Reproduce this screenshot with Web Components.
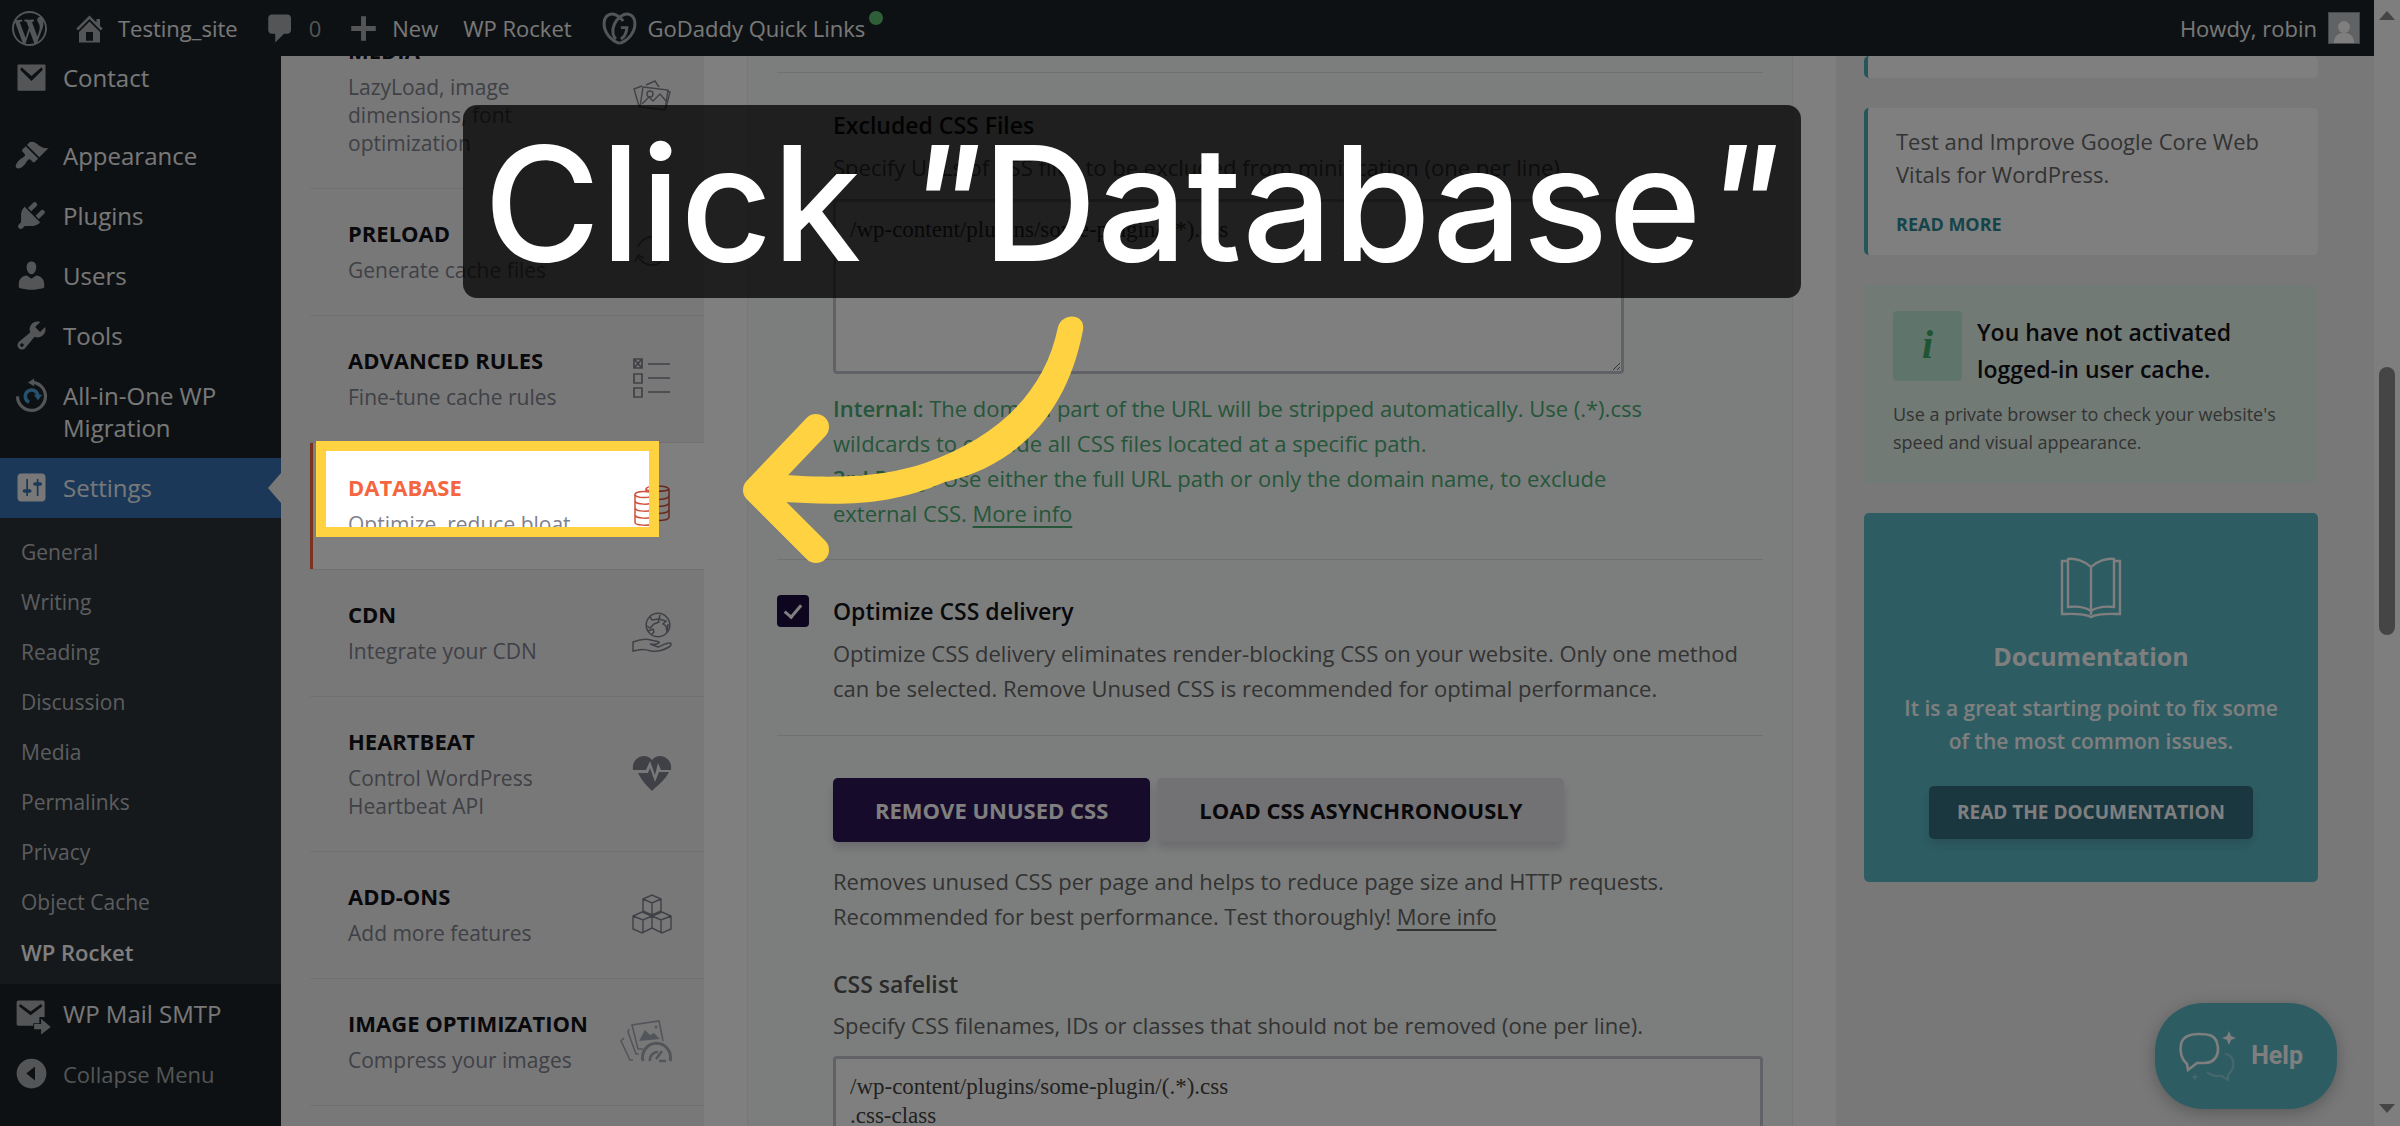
<!DOCTYPE html>
<html lang="en">
<head>
<meta charset="utf-8">
<title>WP Rocket</title>
<style>
    html, body { margin: 0; height: 100%; }
    body { overflow: hidden; background: #f0f0f1; color: #3c434a; font-family: "Open Sans", "Noto Sans", sans-serif; }
</style>
</head>
<body>
<wp-screen></wp-screen>

<script>
// --- Icons ---
const ICONS = {
    wordpress: '<path fill="currentColor" d="M20 10c0-5.51-4.49-10-10-10C4.48 0 0 4.49 0 10c0 5.52 4.48 10 10 10 5.51 0 10-4.48 10-10zM7.78 15.37L4.37 6.22c.55-.02 1.17-.08 1.17-.08.5-.06.44-1.13-.06-1.11 0 0-1.45.11-2.37.11-.18 0-.37 0-.58-.01C4.12 2.69 6.87 1.11 10 1.11c2.33 0 4.45.87 6.05 2.34-.68-.11-1.65.39-1.65 1.58 0 .74.45 1.36.9 2.1.35.61.55 1.36.55 2.46 0 1.49-1.4 5-1.4 5l-3.03-8.37c.54-.02.82-.17.82-.17.5-.05.44-1.25-.06-1.22 0 0-1.44.12-2.38.12-.87 0-2.33-.12-2.33-.12-.5-.03-.56 1.2-.06 1.22l.92.08 1.26 3.41zM17.41 10c.24-.64.74-1.87.43-4.25.7 1.29 1.05 2.71 1.05 4.25 0 3.29-1.73 6.24-4.4 7.78.97-2.59 1.94-5.2 2.92-7.78zM6.1 18.09C3.12 16.65 1.11 13.53 1.11 10c0-1.3.23-2.48.72-3.59C3.25 10.3 4.67 14.2 6.1 18.09zm4.03-6.63l2.58 6.98c-.86.29-1.76.45-2.71.45-.79 0-1.57-.11-2.29-.33.81-2.38 1.62-4.74 2.42-7.1z"/>',
    home: '<path fill="currentColor" d="M16 8.5l1.53 1.53-1.06 1.06L10 4.6l-6.47 6.49-1.06-1.06L10 2.5l4 4v-2h2v4zm-6-2.46l6 5.99V18H4v-5.97zM12 17v-5H8v5h4z"/>',
    comment: '<path fill="currentColor" d="M5 2h9c1.1 0 2 .9 2 2v7c0 1.1-.9 2-2 2h-2l-5 5v-5H5c-1.1 0-2-.9-2-2V4c0-1.1.9-2 2-2z"/>',
    plus: '<path fill="currentColor" d="M8.600 3h2.800v5.600H17v2.800h-5.600V17H8.600v-5.600H3V8.600h5.600z"/>',
    godaddy: '<g fill="none" stroke="currentColor" stroke-width="1.700"><path d="M10 18.500C5 17 1 12 1.200 7 1.300 2 5.500.5 9 2.800c1.500 1 2.500 2 3 3"/><path d="M10 18.500c5-1.500 9-6.500 8.800-11.500C18.700 2 14.500.5 11 2.800 7.500 5.200 5.600 9.500 6.300 13c.3 1.400.9 2.400 1.700 3"/><path d="M10.800 9.500h3.400c-.2 3-1.600 5.500-3.400 6.500"/></g>',
    contact: '<path fill="currentColor" fill-rule="evenodd" d="M2.500 2.500h15a.5.5 0 0 1 .5.5v14a.5.5 0 0 1-.5.5h-15A.5.5 0 0 1 2 17V3a.5.5 0 0 1 .5-.5zM4.300 4.200L3.500 5.500 10 12l6.500-6.500-.8-1.300L10 9.200z"/>',
    appearance: '<path fill="currentColor" d="M14.48 11.06L7.41 3.99l1.5-1.5c.5-.56 2.3-.47 3.51.32 1.21.8 1.43 1.28 2.91 2.1 1.18.64 2.45 1.26 4.45.85zm-.71.71L6.7 4.7 4.93 6.47c-.39.39-.39 1.02 0 1.41l1.06 1.06c.39.39.39 1.03 0 1.42-.6.6-1.43 1.11-2.21 1.69-.35.26-.7.53-1.01.84C1.43 14.23.4 16.08 1.4 17.07c.99 1 2.84-.03 4.18-1.36.31-.31.58-.66.85-1.02.57-.78 1.08-1.61 1.69-2.21.39-.39 1.02-.39 1.41 0l1.06 1.06c.39.39 1.02.39 1.41 0z"/>',
    plugins: '<path fill="currentColor" d="M13.11 4.36L9.87 7.6 8 5.73l3.24-3.24c.35-.34 1.05-.2 1.56.32.52.51.66 1.21.31 1.55zm-8 1.77l.91-1.12 9.01 9.01-1.19.84c-.71.71-2.63 1.16-3.82 1.16H6.14L4.9 17.26c-.59.59-1.54.59-2.12 0-.59-.58-.59-1.53 0-2.12l1.24-1.24v-3.88c0-1.13.4-3.19 1.09-3.89zm7.26 3.97l3.24-3.24c.34-.35 1.04-.21 1.55.31.52.51.66 1.21.31 1.55l-3.24 3.25z"/>',
    users: '<path fill="currentColor" d="M10 9.25c-2.27 0-2.73-3.44-2.73-3.44C7 4.02 7.82 2 9.97 2c2.16 0 2.98 2.02 2.71 3.81 0 0-.41 3.44-2.68 3.44zm0 2.57L12.72 10c2.39 0 4.52 2.33 4.52 4.53v2.49s-3.65 1.13-7.24 1.13c-3.65 0-7.24-1.13-7.24-1.13v-2.49c0-2.25 1.94-4.48 4.47-4.48z"/>',
    tools: '<path fill="currentColor" d="M16.68 9.77c-1.34 1.34-3.3 1.67-4.95.99l-5.41 6.52c-.99.99-2.59.99-3.58 0s-.99-2.59 0-3.57l6.52-5.42c-.68-1.65-.35-3.61.99-4.95 1.28-1.28 3.12-1.62 4.72-1.06l-2.89 2.89 2.82 2.82 2.86-2.87c.53 1.58.18 3.39-1.08 4.65zM3.81 16.21c.4.39 1.04.39 1.43 0 .4-.4.4-1.04 0-1.43-.39-.4-1.03-.4-1.43 0-.39.39-.39 1.03 0 1.43z"/>',
    migration: '<g fill="none" stroke-width="1.800"><path stroke="currentColor" d="M2 10.500a8 8 0 1 0 8.500-8"/><path fill="currentColor" d="M8 2.500L11.500.300v4.400z"/><path stroke="#4aa3df" stroke-width="2" d="M8.600 13.800a3.600 3.600 0 1 1 5-4"/><path fill="#4aa3df" d="M11.300 9.500h4.800l-2.400 3.200z"/></g>',
    settings: '<path fill="currentColor" d="M18 16V4c0-1.100-.9-2-2-2H4c-1.100 0-2 .9-2 2v12c0 1.100.9 2 2 2h12c1.100 0 2-.9 2-2zM8 11h1c.55 0 1 .45 1 1s-.45 1-1 1H8v1.500c0 .28-.22.5-.5.5s-.5-.22-.5-.5V13H6c-.55 0-1-.45-1-1s.45-1 1-1h1V5.500c0-.28.22-.5.5-.5s.5.22.5.5V11zm5-2h-1c-.55 0-1-.45-1-1s.45-1 1-1h1V5.500c0-.28.22-.5.5-.5s.5.22.5.5V7h1c.55 0 1 .45 1 1s-.45 1-1 1h-1v5.500c0 .28-.22.5-.5.5s-.5-.22-.5-.5V9z"/>',
    mail: '<path fill="currentColor" fill-rule="evenodd" d="M2.500 2.500h14c.6 0 1 .4 1 1V12h-3v3.500H11V17H2.500c-.6 0-1-.4-1-1V3.500c0-.6.4-1 1-1zM3.600 4.500L2.800 5.800 9.500 11l6.700-5.200-.8-1.300-5.900 4.300z"/><path fill="currentColor" d="M11.500 16h4v-3l5.500 4.700-5.500 4.300v-3h-4z"/>',
    collapse: '<path fill="currentColor" fill-rule="evenodd" d="M10 1.500a8.500 8.500 0 1 1 0 17 8.500 8.500 0 0 1 0-17zM12 6l-5 4 5 4z"/>',
    media: '<g fill="none" stroke="currentColor" stroke-width="1.400"><path d="M11 11l25 3-3 20-25-3z"/><path d="M8 30l-1 0-5-17 8-3M14 9l9-4 4 6M34 32l4-16-3-1"/><circle cx="18" cy="18" r="3"/><path d="M10 28l7-7 4 4 7-7 6 7"/></g>',
    preload: '<g fill="none" stroke="currentColor" stroke-width="1.600"><path d="M6 16a15 15 0 0 1 28-1M34 24a15 15 0 0 1-28 1"/><path d="M28 13l6 3 3-7M12 27l-6-3-3 7"/></g>',
    rules: '<g fill="none" stroke="currentColor" stroke-width="1.700"><path d="M2 1h8v9H2zM2 16h8v9H2zM2 30h8v9H2zM3 2l6 7M9 2L3 9M16 6h22M16 20h22M16 34h22"/></g>',
    database: '<g fill="none" stroke="currentColor" stroke-width="1.500"><ellipse cx="12" cy="9.500" rx="9" ry="3"/><path d="M3 9.500v28c0 3 14 3.500 18 1.500V9.500M3 16c1 4 16 4 18 1M3 23c1 4 16 4 18 1M3 30c1 4 16 4 18 1"/><path d="M14 6.500V4c1-4 21-4 23 0v28c0 3-8 4-13 3M14 4c1 3 21 3 23 0M37 11c-1 3-9 4-14 3M37 18c-1 3-9 4-14 3M37 25c-1 3-9 4-14 3"/></g>',
    cdn: '<g fill="none" stroke="currentColor" stroke-width="1.500"><circle cx="26" cy="13" r="11.800"/><path d="M18 5l2 3 6-1 1 3-5 2-4 4-3-2M16 19l5-2 1 3-3 3M28 3l-1 4 7 2-3 3 3 2 1 6 1-8"/><path d="M1 30c5-2 12-4 18-2 3 1 7 1 8 2s-3 3-9 2l8 3c5-1 8-5 12-4 2 0 1 3-1 4-7 4-12 5-18 4-6-2-9-2-13-1l-5 1z"/></g>',
    heartbeat: '<path fill="currentColor" d="M1 17C-1 5 13-2 20 7 27-2 41 5 39 17H29l-3-7-3 12-5-14-4 9zM6 20h10l2-5 5 14 4-10h10C33 27 25 33 20 38 15 33 10 28 6 20z"/>',
    addons: '<g fill="none" stroke="currentColor" stroke-width="1.400"><path d="M11 5l9-4 9 4v12l-9 4-9-4zM11 5l9 4 9-4M20 9v12M1 22l9-4 10 4v12l-10 5-9-4zM1 22l10 4 9-4M11 26v12M20 22l10-4 9 4v13l-9 4-10-5M20 22l9 4 10-4M29 26v12"/></g>',
    images: '<g fill="none" stroke="currentColor" stroke-width="1.600"><path d="M22 29h-5L11 5 38 1l4 20"/><path d="M8 9l-1 3 8 22h3M3 18l-3 3 9 19h3"/><path d="M18 21l6-11 5 5 4-2 6 6z" fill="currentColor" stroke="none"/><circle cx="35" cy="7" r="1.500" fill="currentColor" stroke="none"/><path d="M22 41a14 14 0 1 1 27 0" stroke-width="3"/><path d="M29 41a8 8 0 0 1 8-9M35 39l6-8M38 41h7" stroke-width="2.600"/></g>',
    book: '<g fill="none" stroke="currentColor" stroke-width="2.400"><path d="M32 12C26 6 16 3 9 4v48c8-1 17 0 23 4 6-4 15-5 23-4V4c-7-1-17 2-23 8zM32 12v48"/><path d="M9 6H3v53c10 0 22-1 29 3 7-4 19-3 29-3V6h-6"/></g>',
    chat: '<g fill="none" stroke="currentColor" stroke-width="2.600"><path d="M8 33c-7-6-7-14-6-20C4 5 11 3 20 3s16 1 18 9c3 10-1 20-13 20h-7l-9 7z"/><g stroke-width="2.200" opacity=".3"><path d="M46 23c8 1 10 9 7 16l-4 5 0 5-6-4c-6 0-11 0-15-4"/></g></g><path fill="currentColor" d="M50 0l2 5 5 2-5 2-2 5-2-5-5-2 5-2z"/><path fill="currentColor" opacity=".3" d="M16 42l1 3 3 1-3 1-1 3-1-3-3-1 3-1z"/>'
};

// --- Icon ---
class WpIcon extends HTMLElement {
    constructor() {
        super();
        this.attachShadow({ mode: 'open' });
    }

    connectedCallback() {
        const box = this.getAttribute('box') || '0 0 20 20';
        this.shadowRoot.innerHTML = `
            <style>
                :host { display: block; flex: none; width: 35px; height: 35px; }
                svg { display: block; width: 100%; height: 100%; overflow: visible; }
            </style>
            <svg viewBox="${box}" aria-hidden="true">${ICONS[this.getAttribute('name')]}</svg>
        `;
    }
}

// --- Top admin bar ---
class AdminBar extends HTMLElement {
    constructor() {
        super();
        this.attachShadow({ mode: 'open' });
        this.shadowRoot.innerHTML = `
            <style>
                :host { display: block; background: #1d2327; }
                nav { display: flex; align-items: center; height: 56px; padding: 0 14px 0 12px; font-size: 22px; gap: 25px; }
                a { display: flex; align-items: center; gap: 11px; color: #f0f0f1; text-decoration: none; white-space: nowrap; }
                wp-icon { color: #a7aaad; }
                .count { color: #a7aaad; }
                .links { margin-left: 5px; }
                .dot { width: 14px; height: 14px; border-radius: 7px; background: #5fbf73; align-self: flex-start; margin-left: -7px; }
                .me { margin-left: auto; }
                .avatar { width: 30px; height: 30px; border: 1px solid #8c8f94; background: #c3c4c7; }
                .avatar svg { display: block; width: 100%; height: 100%; }
            </style>
            <nav aria-label="Toolbar">
                <a href="#" aria-label="About WordPress"><wp-icon name="wordpress"></wp-icon></a>
                <a href="#"><wp-icon name="home"></wp-icon>Testing_site</a>
                <a href="#"><wp-icon name="comment"></wp-icon><span class="count">0</span></a>
                <a href="#"><wp-icon name="plus"></wp-icon>New</a>
                <a href="#">WP Rocket</a>
                <a href="#" class="links"><wp-icon name="godaddy"></wp-icon>GoDaddy Quick Links<span class="dot"></span></a>
                <a href="#" class="me">Howdy, robin
                    <span class="avatar"><svg viewBox="0 0 30 30"><circle cx="15" cy="14" r="6" fill="#fff"/><path d="M5 30c0-7 4-9 7-10h6c3 1 7 3 7 10z" fill="#fff"/></svg></span>
                </a>
            </nav>
        `;
    }
}

// --- Left admin menu ---
const MENU = [
    { icon: 'contact', label: 'Contact', gap: true },
    { icon: 'appearance', label: 'Appearance' },
    { icon: 'plugins', label: 'Plugins' },
    { icon: 'users', label: 'Users' },
    { icon: 'tools', label: 'Tools' },
    { icon: 'migration', label: 'All-in-One WP Migration' },
    { icon: 'settings', label: 'Settings', current: true,
      sub: ['General', 'Writing', 'Reading', 'Discussion', 'Media', 'Permalinks', 'Privacy', 'Object Cache', 'WP Rocket'] },
    { icon: 'mail', label: 'WP Mail SMTP' }
];

class AdminMenu extends HTMLElement {
    constructor() {
        super();
        this.attachShadow({ mode: 'open' });
    }

    connectedCallback() {
        const items = MENU.map(item => `
            <li class="${item.gap ? 'gap' : ''}">
                <a href="#" class="top ${item.current ? 'current' : ''}">
                    <wp-icon name="${item.icon}"></wp-icon><span>${item.label}</span>
                </a>
                ${item.sub ? `<ul class="sub">${item.sub.map(s =>
                    `<li><a href="#" class="${s === 'WP Rocket' ? 'on' : ''}">${s}</a></li>`).join('')}</ul>` : ''}
            </li>`).join('');
        this.shadowRoot.innerHTML = `
            <style>
                :host { display: block; background: #1d2327; overflow: hidden; }
                ul { list-style: none; margin: 0; padding: 0; }
                nav > ul { margin-top: -8px; }
                .gap { margin-bottom: 18px; }
                .top, button { display: flex; gap: 14px; align-items: flex-start; padding: 12px 14px; color: #f0f0f1; text-decoration: none; font: inherit; font-size: 24px; line-height: 32px; }
                .top span, button span { padding: 2px 0; }
                wp-icon { color: #a7aaad; }
                .current { position: relative; background: #3670b0; }
                .current wp-icon { color: #f0f0f1; }
                .current::after { content: ""; position: absolute; right: 0; top: 15px; border: 15px solid transparent; border-left-width: 0; border-right: 13px solid #f0f0f1; }
                .sub { background: #2c3338; padding: 9px 0 7px; }
                .sub a { display: block; padding: 0 21px; color: #b8babd; text-decoration: none; font-size: 21px; line-height: 50px; }
                .sub a.on { color: #fff; font-weight: 600; font-size: 22px; }
                button { border: 0; background: none; color: #a7aaad; font-size: 22px; cursor: pointer; }
            </style>
            <nav aria-label="Main menu">
                <ul>${items}</ul>
                <button type="button"><wp-icon name="collapse"></wp-icon><span>Collapse Menu</span></button>
            </nav>
        `;
    }
}

// --- Plugin section tab ---
class SectionTab extends HTMLElement {
    constructor() {
        super();
        this.attachShadow({ mode: 'open' });
    }

    connectedCallback() {
        this.shadowRoot.innerHTML = `
            <style>
                :host { display: block; border-bottom: 1px solid #e0e1e6; }
                a { display: flex; align-items: center; padding: 24px 32px 31px 38px; color: #7f828c; text-decoration: none; }
                .text { flex: 1; min-width: 0; white-space: nowrap; }
                strong { display: block; color: #121116; font-size: 22px; line-height: 40px; }
                p { margin: 3px 0 0; max-width: 240px; font-size: 21px; line-height: 28px; white-space: normal; }
                wp-icon { width: 40px; height: 40px; margin-top: 4px; }
                :host([active]) { background: #fff; }
                :host([active]) a { padding-left: 35px; border-left: 3px solid #f56640; }
                :host([active]) strong { color: #f56640; }
                :host([active]) wp-icon { color: #d0503c; }
                wp-icon[name="images"] { color: #a5aab4; width: 51px; height: 42px; margin-left: -11px; }
            </style>
            <a href="#">
                <span class="text"><strong><slot name="title"></slot></strong><p><slot></slot></p></span>
                <wp-icon name="${this.getAttribute('icon')}" box="${this.getAttribute('box') || '0 0 40 40'}"></wp-icon>
            </a>
        `;
    }
}

class SectionNav extends HTMLElement {
    constructor() {
        super();
        this.attachShadow({ mode: 'open' });
        this.shadowRoot.innerHTML = `
            <style>
                :host { display: block; background: #f0f0f1; padding-left: 29px; overflow: hidden; }
                nav { margin-top: -50px; }
            </style>
            <nav aria-label="Sections">
                <section-tab icon="media"><span slot="title">MEDIA</span>LazyLoad, image dimensions, font optimization</section-tab>
                <section-tab icon="preload"><span slot="title">PRELOAD</span>Generate cache files</section-tab>
                <section-tab icon="rules"><span slot="title">ADVANCED RULES</span>Fine-tune cache rules</section-tab>
                <section-tab icon="database" active><span slot="title">DATABASE</span>Optimize, reduce bloat</section-tab>
                <section-tab icon="cdn"><span slot="title">CDN</span>Integrate your CDN</section-tab>
                <section-tab icon="heartbeat"><span slot="title">HEARTBEAT</span>Control WordPress Heartbeat API</section-tab>
                <section-tab icon="addons"><span slot="title">ADD-ONS</span>Add more features</section-tab>
                <section-tab icon="images" box="0 0 51 42"><span slot="title">IMAGE OPTIMIZATION</span>Compress your images</section-tab>
            </nav>
        `;
    }
}

// --- File optimization settings ---
class OptionsPanel extends HTMLElement {
    constructor() {
        super();
        this.attachShadow({ mode: 'open' });
        this.shadowRoot.innerHTML = `
            <style>
                :host { display: block; background: #fff; padding: 0 43px; overflow: hidden; }
                form { background: #f9fcfa; border: solid #eceeed; border-width: 0 1px; padding: 16px 29px 0; height: 100%; box-sizing: border-box; }
                section { border-top: 1px solid #e0e1e6; padding-left: 56px; font-size: 22px; line-height: 35px; color: #666; }
                .title { display: block; color: #121116; font-size: 23px; font-weight: 600; }
                p { margin: 0; }
                textarea { display: block; box-sizing: border-box; width: 100%; border: 3px solid #c2c3d0; border-radius: 4px; background: #fff; color: #444; padding: 13px 14px; font: 23px/29px "Liberation Serif", serif; }
                .short { width: 85%; height: 175px; }
                .files { padding-top: 35px; padding-bottom: 28px; }
                .files p { margin: 7px 0 14px; }
                .files .hint { margin: 17px 0 0; color: #4aac74; }
                b { font-weight: 600; }
                a { color: inherit; text-decoration-thickness: 2px; text-underline-offset: 4px; }
                .delivery { padding: 34px 10px 29px 0; display: grid; grid-template-columns: 32px 1fr; column-gap: 24px; }
                .delivery p { grid-column: 2; margin-top: 7px; }
                input { appearance: none; width: 32px; height: 32px; margin: 1px 0; border-radius: 4px; background: #1c0a3c; display: grid; place-content: center; }
                input::after { content: ""; width: 7px; height: 14px; border: solid #fff; border-width: 0 3px 3px 0; transform: rotate(40deg); margin-bottom: 4px; }
                .method { padding-top: 42px; }
                .buttons { display: flex; gap: 7px; margin-bottom: 22px; }
                button { border: 0; border-radius: 5px; padding: 0 42px; font: 700 22px/64px "Open Sans", sans-serif; background: #e4e4e9; color: #121116; box-shadow: 0 6px 10px rgba(40, 10, 80, .16); cursor: pointer; white-space: nowrap; }
                button.primary { background: #2d1657; color: #fff; }
                .safe { color: #555; margin-top: 33px; }
                .method .safehint { margin: 6px 0 13px; }
                .tall { height: 220px; }
            </style>
            <form>
                <section class="files">
                    <label class="title" for="excluded">Excluded CSS Files</label>
                    <p>Specify URLs of CSS files to be excluded from minification (one per line).</p>
                    <textarea id="excluded" class="short">/wp-content/plugins/some-plugin/(.*).css</textarea>
                    <p class="hint"><b>Internal:</b> The domain part of the URL will be stripped automatically. Use (.*).css<br>wildcards to exclude all CSS files located at a specific path.<br><b>3rd Party:</b> Use either the full URL path or only the domain name, to exclude<br>external CSS. <a href="#">More info</a></p>
                </section>
                <section class="delivery">
                    <input type="checkbox" id="delivery" checked>
                    <label class="title" for="delivery">Optimize CSS delivery</label>
                    <p>Optimize CSS delivery eliminates render-blocking CSS on your website. Only one method can be selected. Remove Unused CSS is recommended for optimal performance.</p>
                </section>
                <section class="method">
                    <div class="buttons">
                        <button type="button" class="primary">REMOVE UNUSED CSS</button>
                        <button type="button">LOAD CSS ASYNCHRONOUSLY</button>
                    </div>
                    <p>Removes unused CSS per page and helps to reduce page size and HTTP requests.<br>Recommended for best performance. Test thoroughly! <a href="#">More info</a></p>
                    <label class="title safe" for="safelist">CSS safelist</label>
                    <p class="safehint">Specify CSS filenames, IDs or classes that should not be removed (one per line).</p>
                    <textarea id="safelist" class="tall">/wp-content/plugins/some-plugin/(.*).css
.css-class</textarea>
                </section>
            </form>
        `;
    }
}

// --- Right column ---
class InfoColumn extends HTMLElement {
    constructor() {
        super();
        this.attachShadow({ mode: 'open' });
        this.shadowRoot.innerHTML = `
            <style>
                :host { display: flex; flex-direction: column; gap: 30px; box-sizing: border-box; padding: 0 56px 0 28px; background: #f0f0f1; overflow: hidden; }
                article { border-radius: 5px; box-sizing: border-box; }
                p, h3 { margin: 0; }
                a { text-decoration: none; }
                .news { background: #fff; border-left: 4px solid #4aacb8; padding: 17px 28px 14px; font-size: 22px; line-height: 33px; color: #666; }
                .news.tail { height: 22px; padding: 0; }
                .news a { display: block; margin-top: 17px; color: #2e8795; font-size: 18px; font-weight: 700; }
                .notice { background: #e4f5ec; padding: 26px 29px 27px; }
                .head { display: flex; gap: 15px; }
                .badge { flex: none; width: 69px; height: 70px; border-radius: 4px; background: #bfe8d4; color: #3fa868; text-align: center; font: italic 700 40px/68px "Liberation Serif", serif; }
                .notice h3 { font-size: 23px; line-height: 37px; font-weight: 600; color: #121116; padding-top: 3px; }
                .notice p { margin-top: 12px; font-size: 18px; line-height: 28px; color: #666; white-space: nowrap; }
                .docs { background: #5bb9c6; color: #fff; display: flex; flex-direction: column; align-items: center; text-align: center; padding: 42px 28px; height: 369px; font-size: 21px; line-height: 33px; font-weight: 600; }
                .docs wp-icon { width: 64px; height: 64px; }
                .docs h3 { font-size: 25px; line-height: 40px; margin: 17px 0 16px; }
                .docs a { margin-top: 28px; padding: 0 28px; border-radius: 5px; background: #356e7e; color: #fff; font-size: 19px; line-height: 53px; font-weight: 700; box-shadow: 0 6px 10px rgba(0, 0, 0, .12); }
            </style>
            <article class="news tail"></article>
            <article class="news">
                <p>Test and Improve Google Core Web Vitals for WordPress.</p>
                <a href="#">READ MORE</a>
            </article>
            <article class="notice">
                <div class="head"><span class="badge">i</span><h3>You have not activated logged-in user cache.</h3></div>
                <p>Use a private browser to check your website's<br>speed and visual appearance.</p>
            </article>
            <article class="docs">
                <wp-icon name="book" box="0 0 64 64"></wp-icon>
                <h3>Documentation</h3>
                <p>It is a great starting point to fix some of the most common issues.</p>
                <a href="#">READ THE DOCUMENTATION</a>
            </article>
        `;
    }
}

class HelpButton extends HTMLElement {
    constructor() {
        super();
        this.attachShadow({ mode: 'open' });
        this.shadowRoot.innerHTML = `
            <style>
                :host { display: block; }
                button { display: flex; align-items: center; gap: 14px; height: 106px; padding: 0 34px 0 24px; border: 0; border-radius: 48px; background: #5bb9c6; color: #fff; font: 700 25px/32px Roboto, sans-serif; box-shadow: 0 4px 16px rgba(0, 0, 0, .25); cursor: pointer; }
                wp-icon { width: 58px; height: 50px; }
            </style>
            <button type="button"><wp-icon name="chat" box="0 0 58 50"></wp-icon>Help</button>
        `;
    }
}

class ScrollTrack extends HTMLElement {
    constructor() {
        super();
        this.attachShadow({ mode: 'open' });
        this.shadowRoot.innerHTML = `
            <style>
                :host { display: grid; grid-template-rows: auto 347fr 269fr 469fr auto; justify-items: center; box-sizing: border-box; padding: 11px 0 13px; background: #fcfcfc; }
                svg { display: block; width: 16px; height: 9px; }
                .thumb { grid-row: 3; width: 16px; border-radius: 8px; background: #8b8b8b; }
                .down { grid-row: 5; }
            </style>
            <svg viewBox="0 0 16 9"><path d="M0 9L8 0l8 9z" fill="#8b8b8b"/></svg>
            <div class="thumb"></div>
            <svg class="down" viewBox="0 0 16 9"><path d="M0 0h16L8 9z" fill="#8b8b8b"/></svg>
        `;
    }
}

// --- Walkthrough layer: spotlight, caption and pointer ---
class GuideLayer extends HTMLElement {
    constructor() {
        super();
        this.attachShadow({ mode: 'open' });
        this.shadowRoot.innerHTML = `
            <style>
                :host { display: block; overflow: hidden; pointer-events: none; }
                .spot { position: absolute; left: 316px; top: 441px; width: 323px; height: 76px; border: 10px solid #ffd242; box-shadow: 0 0 0 3000px rgba(0, 0, 0, .5); }
                .caption { position: absolute; left: 463px; top: 105px; width: 1338px; height: 193px; border-radius: 14px; background: rgba(0, 0, 0, .75); color: #fff; text-align: center; white-space: nowrap; font: 500 159px/196px Inter, sans-serif; }
                svg { position: absolute; left: 740px; top: 310px; width: 350px; height: 260px; }
            </style>
            <div class="spot"></div>
            <div class="caption"><slot></slot></div>
            <svg viewBox="740 310 350 260" aria-hidden="true">
                <path fill="#ffd242" d="M1058 327C1062 312 1086 313 1083 330C1068 410 1020 465 945 482C880 510 830 504 765 501V473C840 481 890 475 925 463C995 438 1044 395 1058 327Z"/>
                <path fill="none" stroke="#ffd242" stroke-width="26" stroke-linecap="round" stroke-linejoin="round" d="M816 427L756 490L816 550"/>
            </svg>
        `;
    }
}

// --- Whole screen ---
class WpScreen extends HTMLElement {
    constructor() {
        super();
        this.attachShadow({ mode: 'open' });
        this.shadowRoot.innerHTML = `
            <style>
                :host { display: grid; grid-template: auto minmax(0, 1fr) / minmax(0, 1fr) 26px; height: 100vh; position: relative; }
                main { display: grid; grid-template-columns: 281px 423px minmax(0, 1fr) 538px; min-height: 0; }
                scroll-track { grid-column: 2; grid-row: 1 / 3; }
                help-button { position: absolute; right: 63px; bottom: 17px; }
                guide-layer { position: absolute; inset: 0; }
                .quote { font-style: italic; }
            </style>
            <admin-bar></admin-bar>
            <main>
                <admin-menu></admin-menu>
                <section-nav></section-nav>
                <options-panel></options-panel>
                <info-column></info-column>
            </main>
            <scroll-track></scroll-track>
            <help-button></help-button>
            <guide-layer>Click <span class="quote">"</span>Database<span class="quote">"</span></guide-layer>
        `;
    }
}

customElements.define('wp-icon', WpIcon);
customElements.define('admin-bar', AdminBar);
customElements.define('admin-menu', AdminMenu);
customElements.define('section-tab', SectionTab);
customElements.define('section-nav', SectionNav);
customElements.define('options-panel', OptionsPanel);
customElements.define('info-column', InfoColumn);
customElements.define('help-button', HelpButton);
customElements.define('scroll-track', ScrollTrack);
customElements.define('guide-layer', GuideLayer);
customElements.define('wp-screen', WpScreen);
</script>
</body>
</html>
